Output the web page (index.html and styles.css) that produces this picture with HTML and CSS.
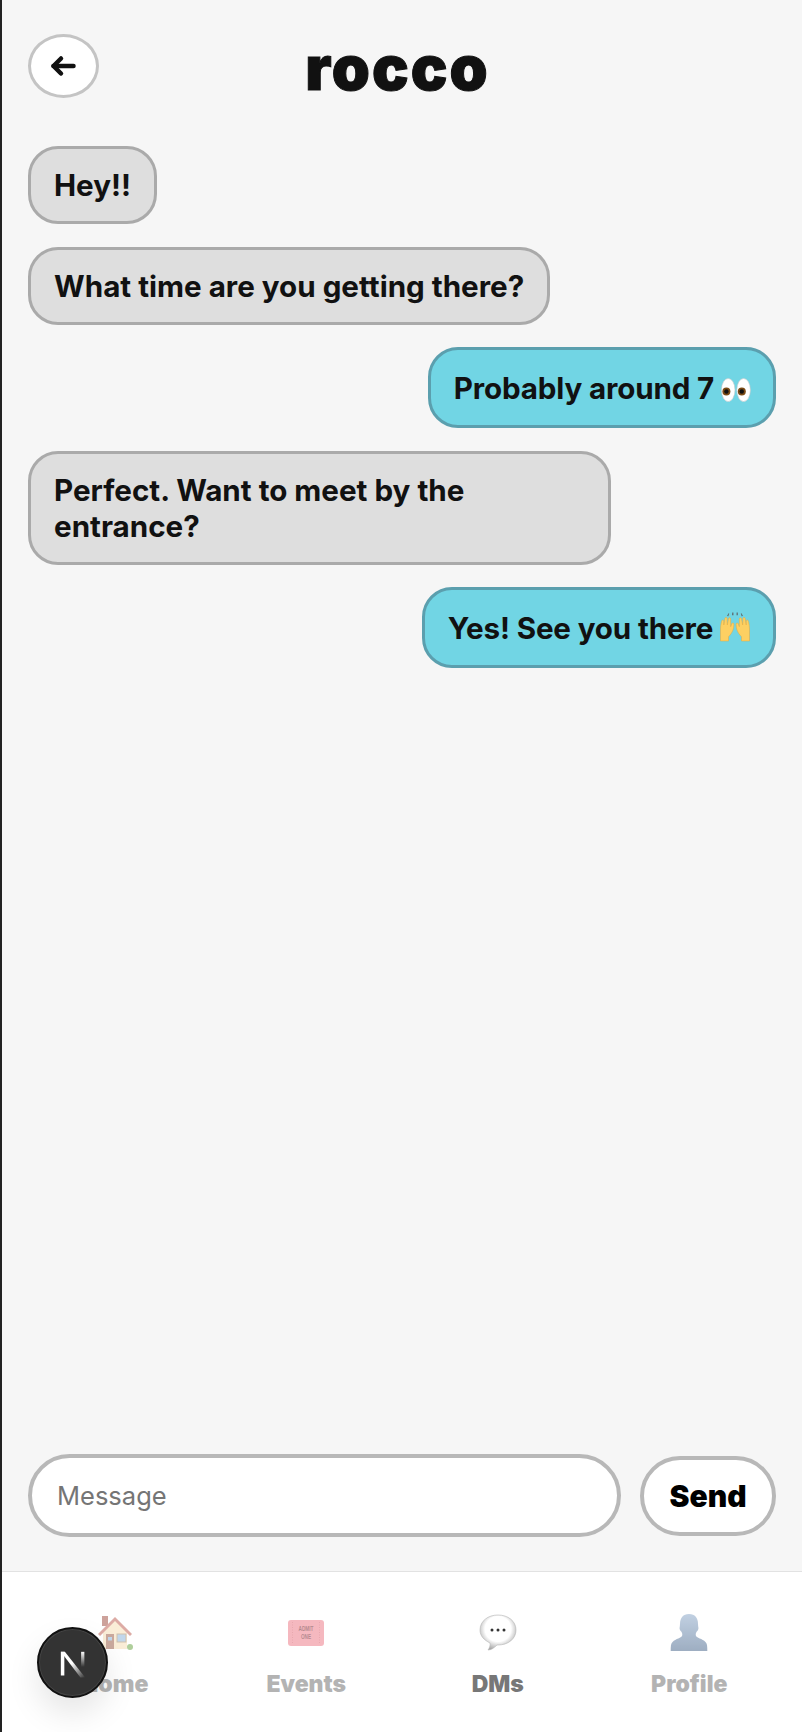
FILE: index.html

```html
<!DOCTYPE html>
<html lang="en">
<head>
    <meta charset="UTF-8">
    <meta name="viewport" content="width=device-width, initial-scale=1.0">
    <title>rocco - DMs</title>
    <link rel="stylesheet" href="styles.css">
</head>
<body>

<div class="app">
    <header class="top">
        <button class="back" aria-label="Back">
            <svg width="26" height="22" viewBox="0 0 26 22" fill="none" stroke="#111" stroke-width="4.500" stroke-linecap="round" stroke-linejoin="round">
                <path d="M23.500 11H3.500"/>
                <path d="M11 3.500 3.500 11l7.500 7.500"/>
            </svg>
        </button>
        <h1>rocco</h1>
    </header>

    <main class="messages">
        <div class="bubble">Hey!!</div>
        <div class="bubble">What time are you getting there?</div>
        <div class="bubble mine">Probably around 7
            <svg class="emoji" width="30" height="24" viewBox="0 0 30 24">
                <ellipse cx="7.200" cy="12" rx="6.800" ry="11.500" fill="#fff" stroke="#c9c9c9" stroke-width=".6"/>
                <ellipse cx="22.600" cy="12" rx="6.800" ry="11.500" fill="#fff" stroke="#c9c9c9" stroke-width=".6"/>
                <circle cx="5.400" cy="13.500" r="4" fill="#7a4a14"/>
                <circle cx="20.800" cy="13.500" r="4" fill="#7a4a14"/>
                <circle cx="5.400" cy="13.500" r="2.200" fill="#111"/>
                <circle cx="20.800" cy="13.500" r="2.200" fill="#111"/>
            </svg>
        </div>
        <div class="bubble wide">Perfect. Want to meet by the entrance?</div>
        <div class="bubble mine">Yes! See you there
            <svg class="emoji hands" width="32" height="30" viewBox="0 0 32 30">
                <g fill="#fdd062" stroke="#e8a93a" stroke-width=".5">
                    <path d="M1.500 29V17c0-2 .4-5 1-7.500s2.300-1.800 2.300.2V13l1-6.500c.3-1.600 2.300-1.400 2.300.2l.2 6.300 1.200-6.200c.3-1.500 2.200-1.300 2.200.4v7.500l1-3c.5-1.300 2.200-1 2.200.6 0 4.500-1.500 8.500-5.400 12.500V29z"/>
                    <path d="M30.500 29V17c0-2-.4-5-1-7.500s-2.300-1.800-2.300.2V13l-1-6.500c-.3-1.600-2.300-1.400-2.300.2l-.2 6.300-1.200-6.200c-.3-1.500-2.200-1.300-2.200.4v7.500l-1-3c-.5-1.300-2.200-1-2.200.6 0 4.500 1.500 8.500 5.400 12.500V29z"/>
                </g>
                <g fill="#5f6f72">
                    <path d="M8 4 9.500 1.200 10.200 1.600 9.400 4.300z"/>
                    <path d="M13 3.200 13.200.6h1.200l.1 2.600z"/>
                    <path d="M18.900 3.200 18.800.6h-1.200l-.1 2.600z"/>
                    <path d="M24 4 22.500 1.200 21.800 1.600 22.600 4.300z"/>
                </g>
            </svg>
        </div>
    </main>

    <form class="composer">
        <input class="field" type="text" placeholder="Message">
        <button class="send" type="button">Send</button>
    </form>

    <nav class="tabs">
        <a class="tab" href="#home">
            <svg class="tab-icon" width="38" height="37" viewBox="0 0 38 37">
                <rect x="6" y="2" width="6" height="10" fill="#a5574a"/>
                <path d="M7 18 19 6l12 12v17H7z" fill="#f6e0b8"/>
                <path d="M2 20 19 3l17 17-2 2L19 7 4 22z" fill="#c2685c"/>
                <rect x="10" y="20" width="8" height="15" fill="#a0644e"/>
                <rect x="12" y="23" width="4" height="3.500" fill="#8fb8dc"/>
                <rect x="21" y="20" width="9" height="8" fill="#8fb8dc" stroke="#a98d6a"/>
                <circle cx="34" cy="33" r="3" fill="#6fa84a"/>
            </svg>
            <span>Home</span>
        </a>
        <a class="tab" href="#events">
            <svg class="tab-icon" width="38" height="37" viewBox="0 0 38 37">
                <rect x="1" y="6" width="36" height="26" rx="3" fill="#ee7f8c"/>
                <path d="M5.500 8v22M32.500 8v22" stroke="#cf5a68" stroke-width=".8" stroke-dasharray="1 1.500"/>
                <text class="admit" x="19" y="17" text-anchor="middle" textLength="15" lengthAdjust="spacingAndGlyphs">ADMIT</text>
                <text class="admit" x="19" y="25" text-anchor="middle" textLength="10" lengthAdjust="spacingAndGlyphs">ONE</text>
            </svg>
            <span>Events</span>
        </a>
        <a class="tab active" href="#dms">
            <svg class="tab-icon" width="38" height="37" viewBox="0 0 38 37">
                <defs>
                    <radialGradient id="balloon" cx=".5" cy=".4" r=".6">
                        <stop offset=".6" stop-color="#fff"/>
                        <stop offset="1" stop-color="#a8a8a8"/>
                    </radialGradient>
                </defs>
                <path d="M19 1c10 0 18 6 18 15s-8 15-18 15h-1c-3 3-6 5-9 5 1.500-2 2.500-5 2-7C5 26 1 22 1 16 1 7 9 1 19 1z" fill="url(#balloon)" stroke="#b5b5b5" stroke-width=".6"/>
                <circle cx="13" cy="16" r="1.500" fill="#333"/>
                <circle cx="19" cy="16" r="1.500" fill="#333"/>
                <circle cx="25" cy="16" r="1.500" fill="#333"/>
            </svg>
            <span>DMs</span>
        </a>
        <a class="tab" href="#profile">
            <svg class="tab-icon" width="38" height="37" viewBox="0 0 38 37">
                <defs>
                    <linearGradient id="bust" x1="0" y1="0" x2="0" y2="1">
                        <stop offset="0" stop-color="#8fabcb"/>
                        <stop offset="1" stop-color="#4f6c90"/>
                    </linearGradient>
                </defs>
                <path d="M19 0c6 0 9 4 9 10 0 3 1 4 0 6-.5 1-1.500 1.500-2 3-.5 1.500-.5 3 1 4 3 2 9 3 10 8 .3 2 .3 4 .3 6H.7c0-2 0-4 .3-6 1-5 7-6 10-8 1.500-1 1.500-2.500 1-4-.5-1.500-1.500-2-2-3-1-2 0-3 0-6 0-6 3-10 9-10z" fill="url(#bust)"/>
            </svg>
            <span>Profile</span>
        </a>
    </nav>
</div>

<button class="dev-badge" aria-label="Open Next.js Dev Tools">
    <svg width="46" height="46" viewBox="0 0 34 34" fill="none">
        <defs>
            <linearGradient id="slash" x1="0" y1="0" x2="1" y2="1">
                <stop offset=".45" stop-color="#fff"/>
                <stop offset="1" stop-color="#fff" stop-opacity="0"/>
            </linearGradient>
            <linearGradient id="stem" x1="0" y1="0" x2="0" y2="1">
                <stop offset="0" stop-color="#fff"/>
                <stop offset=".8" stop-color="#fff" stop-opacity="0"/>
            </linearGradient>
        </defs>
        <rect x="8" y="8" width="2.600" height="17.500" fill="#fff"/>
        <path d="M8 8h3l15 19h-3.500z" fill="url(#slash)"/>
        <rect x="23" y="8" width="2.400" height="14" fill="url(#stem)"/>
    </svg>
</button>

</body>
</html>
```

FILE: styles.css

```css
* {
    box-sizing: border-box;
}
html, body {
    height: 100%;
}
body {
    margin: 0;
    font-family: 'Inter', 'Liberation Sans', sans-serif;
    background-color: #f6f6f6;
    color: #111;
    border-left: 2px solid #222;
    overflow: hidden;
}
.app {
    display: flex;
    flex-direction: column;
    height: 1732px;
}
.top {
    display: flex;
    align-items: flex-start;
    padding: 34px 26px 0;
    height: 146px;
}
.top h1 {
    flex: 1;
    margin: 1px 0 0;
    padding-right: 80px;
    text-align: center;
    font-size: 61px;
    line-height: 66px;
    font-weight: 900;
    letter-spacing: 2px;
    -webkit-text-stroke: 1px #111;
    color: #111;
}
.back {
    display: flex;
    align-items: center;
    justify-content: center;
    width: 71px;
    height: 64px;
    padding: 0 1px 0 0;
    background: white;
    border: 3px solid #c4c4c4;
    border-radius: 50%;
}
.messages {
    flex: 1;
    display: flex;
    flex-direction: column;
    align-items: flex-start;
    gap: 22.500px;
    padding: 0 26px;
}
.bubble {
    max-width: 583px;
    padding: 18px 23px;
    font-size: 29.600px;
    line-height: 36px;
    font-weight: 700;
    background: #dedede;
    border: 3px solid #aaa;
    border-radius: 30px;
}
.wide {
    width: 583px;
}
.mine {
    align-self: flex-end;
    padding: 19.500px 22px 19.500px 23px;
    letter-spacing: -0.15px;
    background: #71d5e4;
    border-color: #5b9fae;
}
.emoji {
    vertical-align: -3px;
}
.hands {
    margin-left: -1px;
}
.composer {
    display: flex;
    align-items: center;
    gap: 19px;
    padding: 0 26px 34px;
}
.field {
    flex: 1;
    min-width: 0;
    height: 83px;
    padding: 0 25px;
    font-family: inherit;
    font-size: 25.500px;
    background: white;
    border: 4px solid #b8b8b8;
    border-radius: 42px;
    outline: none;
}
.field::placeholder {
    color: #757575;
}
.send {
    width: 136px;
    height: 80px;
    font-family: inherit;
    font-size: 30px;
    font-weight: 900;
    color: #000;
    background: white;
    border: 4px solid #b8b8b8;
    border-radius: 40px;
}
.tabs {
    display: grid;
    grid-template-columns: repeat(4, 1fr);
    height: 161px;
    padding: 42px 17px 0;
    background: white;
    border-top: 1px solid #e2e2e2;
}
.tab {
    display: flex;
    flex-direction: column;
    align-items: center;
    gap: 20px;
    font-size: 23px;
    line-height: 27px;
    font-weight: 900;
    color: #b3b3b3;
    text-decoration: none;
}
.tab-icon {
    opacity: 0.55;
}
.active {
    color: #777;
}
.active .tab-icon {
    opacity: 1;
}
.admit {
    font-family: 'Liberation Sans', sans-serif;
    font-size: 7.500px;
    fill: #7a2a34;
}
.dev-badge {
    position: fixed;
    left: 37px;
    top: 1627px;
    display: flex;
    align-items: center;
    justify-content: center;
    width: 71px;
    height: 71px;
    padding: 3px 0 0 1px;
    background: #333;
    border: 2px solid #111;
    border-radius: 50%;
    box-shadow: 0 0 0 1px #444 inset, 0 16px 32px rgba(0,0,0,0.1);
}
```
